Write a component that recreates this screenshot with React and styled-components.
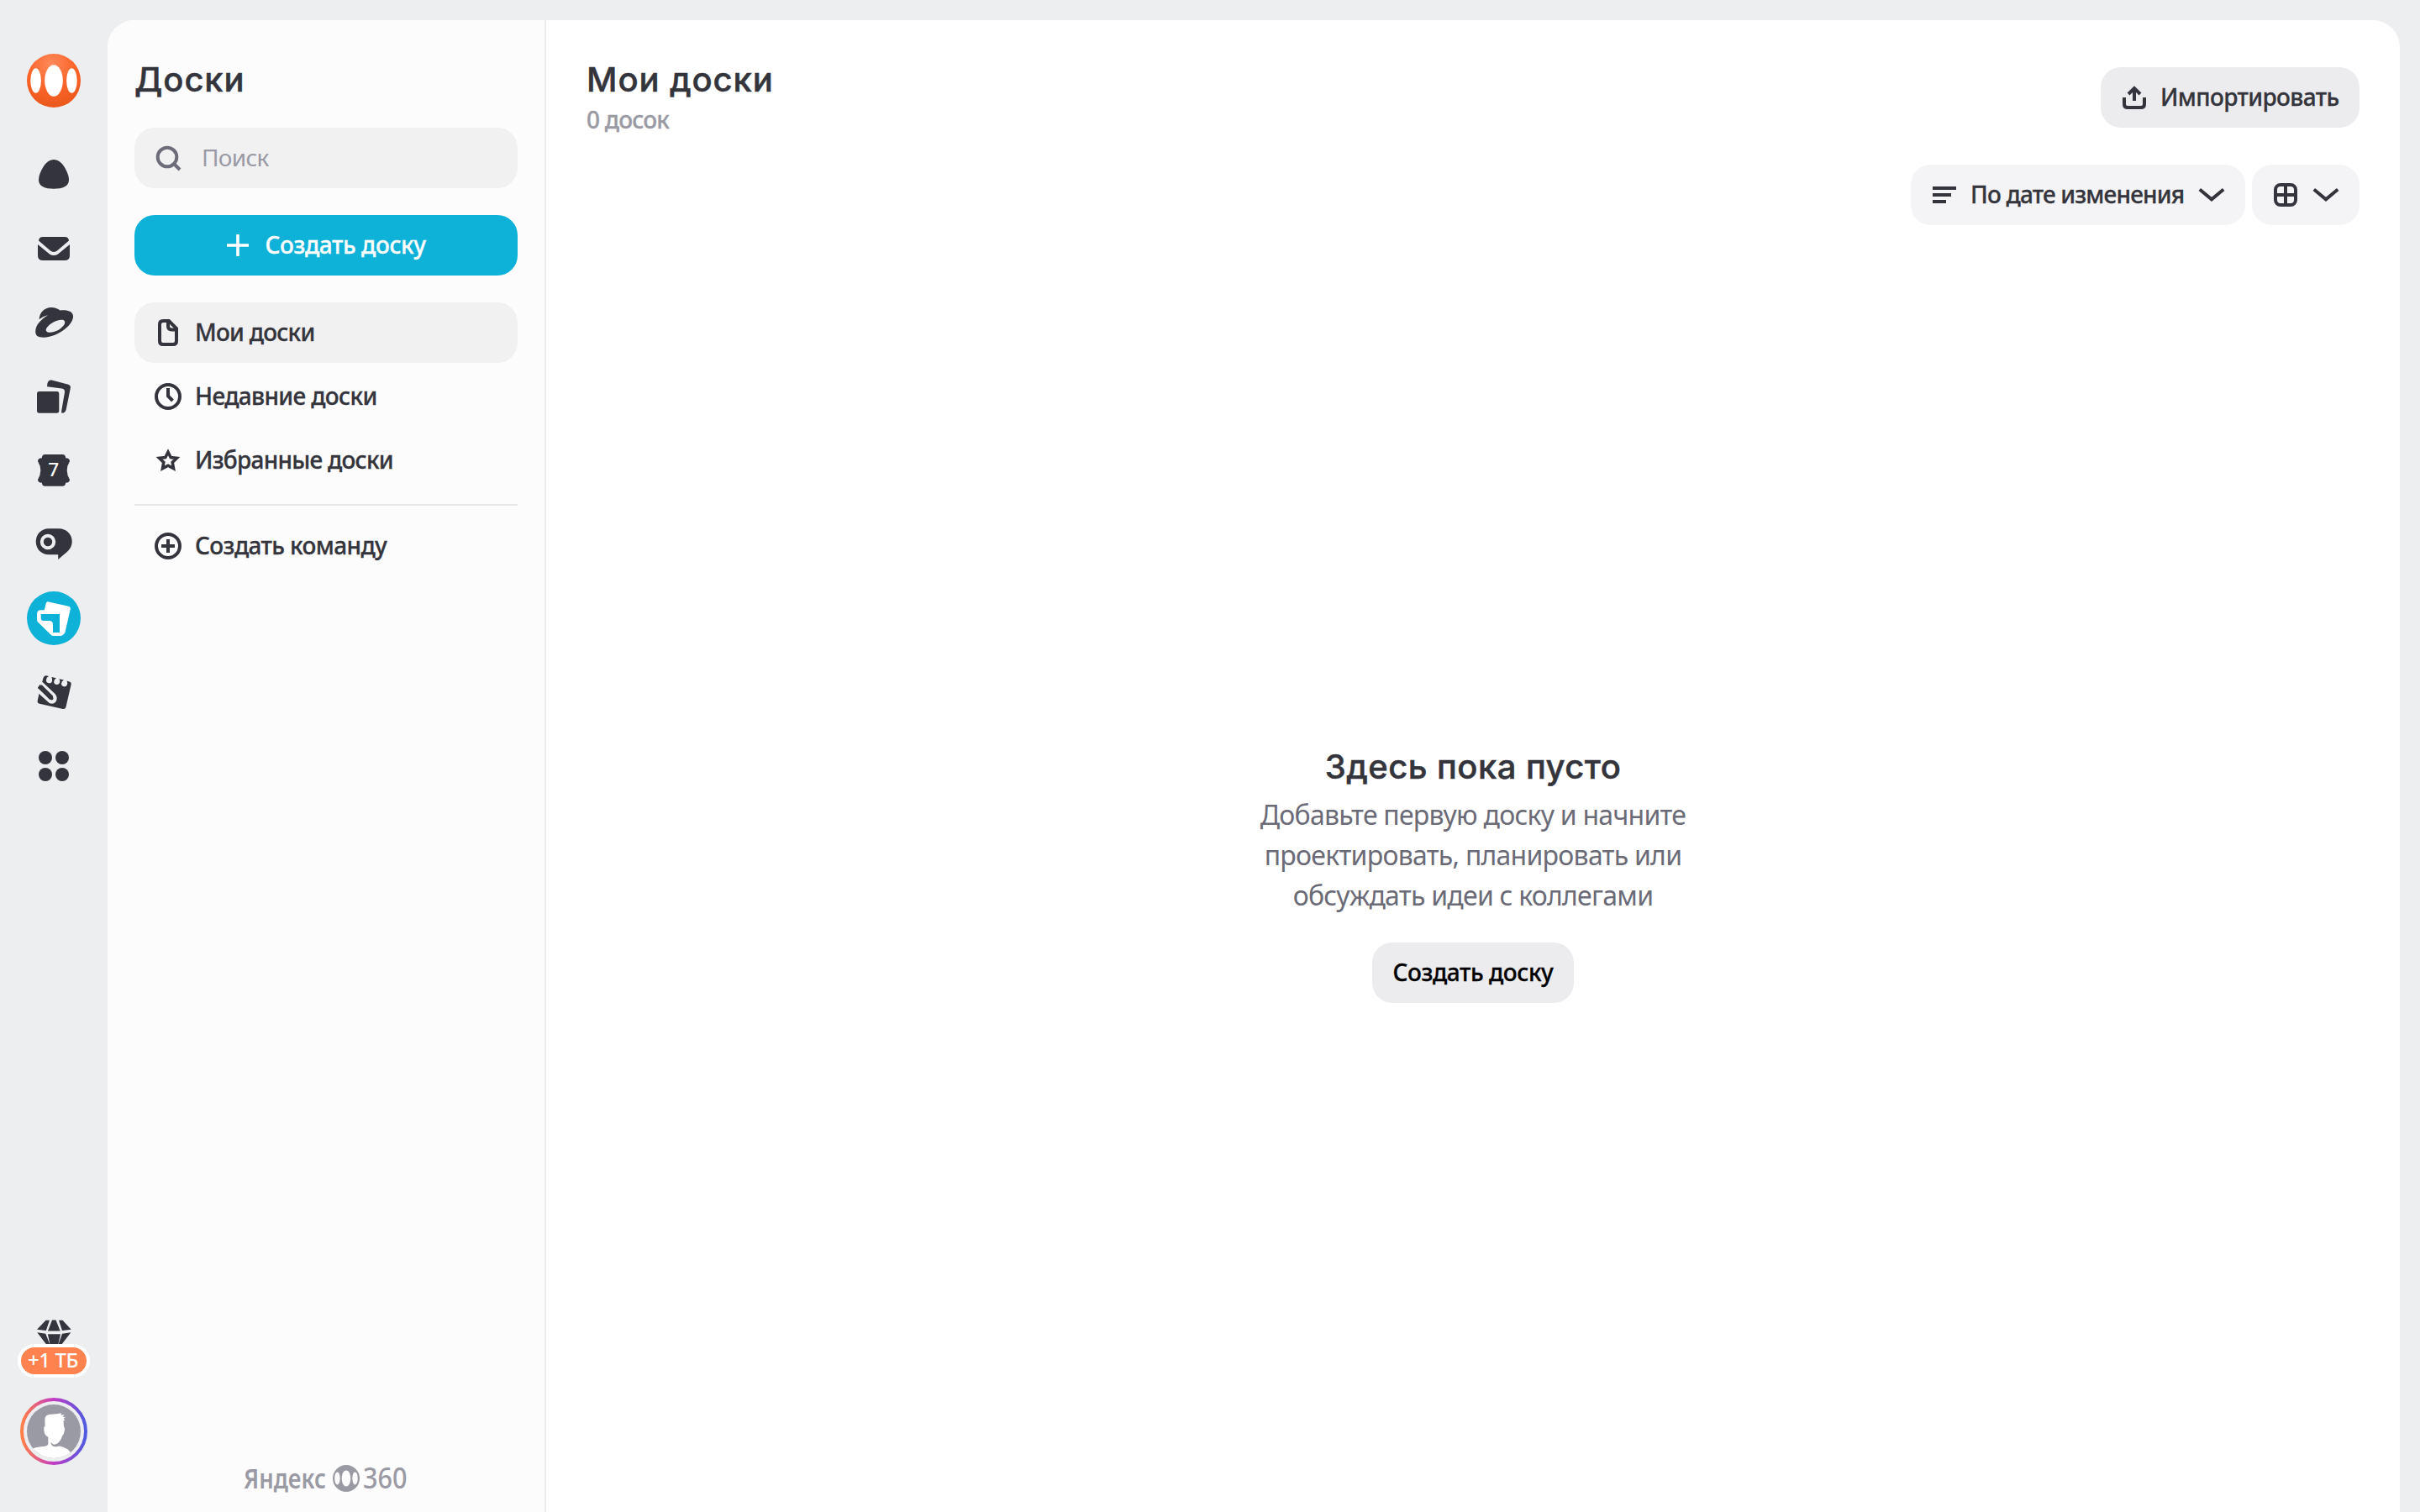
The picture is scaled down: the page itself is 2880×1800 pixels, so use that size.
import styled, { createGlobalStyle } from "styled-components";

const GlobalStyle = createGlobalStyle`
  * {
    box-sizing: border-box;
  }
  body {
    margin: 0;
    background: #edeef0;
    color: #34343c;
    font-family: "Noto Sans", "Open Sans", sans-serif;
  }
  svg {
    display: block;
    flex-shrink: 0;
  }
`;

const Page = styled.div`
  display: flex;
  width: 100%;
  height: 100vh;
  overflow: hidden;
`;

/* left rail */
const Rail = styled.nav`
  display: flex;
  flex-direction: column;
  align-items: center;
  justify-content: space-between;
  width: 128px;
  padding: 64px 0 56px;
  flex-shrink: 0;
`;
const Services = styled.div`
  display: flex;
  flex-direction: column;
  align-items: center;
  gap: 24px;
  > svg:first-child {
    margin-bottom: 24px;
  }
`;
const RailBottom = styled.div`
  display: flex;
  flex-direction: column;
  align-items: center;
`;
const Upsell = styled.div`
  height: 36px;
`;
const Badge = styled.div`
  display: flex;
  align-items: center;
  justify-content: center;
  position: relative;
  width: 86px;
  height: 40px;
  margin-bottom: 24px;
  padding: 0 2px 2px 0;
  border: 4px solid #fff;
  border-radius: 20px;
  background: #ff824f;
  color: #fff;
  font-size: 24px;
  line-height: 28px;
  font-weight: 500;
  letter-spacing: -0.4px;
  white-space: nowrap;
`;

/* boards sidebar */
const Window = styled.div`
  display: flex;
  flex: 1;
  margin: 24px 24px 0 0;
  border-radius: 32px 32px 0 0;
  background: #fff;
  overflow: hidden;
`;
const Sidebar = styled.aside`
  display: flex;
  flex-direction: column;
  width: 522px;
  padding: 46px 32px 12px;
  border-right: 2px solid #ebecee;
  background: #fcfcfc;
  flex-shrink: 0;
`;
const Title = styled.h1`
  margin: 0;
  padding-top: 1px;
  font-family: "Inter", "Noto Sans", sans-serif;
  font-size: 40px;
  line-height: 48px;
  font-weight: 500;
  -webkit-text-stroke: 0.5px currentColor;
  letter-spacing: ${({ $spacing }) => $spacing || 0}px;
  white-space: nowrap;
`;
const Search = styled.div`
  display: flex;
  align-items: center;
  gap: 24px;
  height: 72px;
  margin-top: 33px;
  padding: 0 24px;
  border-radius: 24px;
  background: #f1f1f1;
`;
const Label = styled.span`
  margin-top: -3px;
  font-size: 28px;
  line-height: 36px;
  font-weight: 500;
  -webkit-text-stroke: 0.3px currentColor;
  letter-spacing: ${({ $spacing }) => $spacing}px;
  white-space: nowrap;
`;
const Placeholder = styled(Label)`
  font-weight: 400;
  -webkit-text-stroke: 0;
  color: #9a9aa5;
`;
const CreateButton = styled.button`
  display: flex;
  align-items: center;
  justify-content: center;
  gap: 16px;
  height: 72px;
  margin-top: 32px;
  padding: 0 2px 0 0;
  border: none;
  border-radius: 24px;
  background: #0eb1d8;
  color: #fff;
  font-family: inherit;
  cursor: pointer;
`;
const Menu = styled.ul`
  display: flex;
  flex-direction: column;
  gap: 4px;
  margin: 32px 0 0;
  padding: 0;
  list-style: none;
`;
const MenuItem = styled.li`
  display: flex;
  align-items: center;
  gap: 16px;
  height: 72px;
  padding: 0 24px;
  border-radius: 24px;
  background: ${({ $active }) => ($active ? "#f1f1f1" : "transparent")};
  cursor: pointer;
`;
const Divider = styled.li`
  height: 2px;
  margin: 12px 0 8px;
  background: #e6e6e7;
`;
const SidebarFooter = styled.div`
  display: flex;
  justify-content: center;
  margin-top: auto;
`;

/* content */
const Main = styled.main`
  display: flex;
  flex-direction: column;
  flex: 1;
  padding: 46px 48px 0;
`;
const Header = styled.header`
  display: flex;
  justify-content: space-between;
  align-items: flex-start;
`;
const Count = styled.div`
  margin-top: 5px;
  font-size: 28px;
  line-height: 36px;
  font-weight: 500;
  -webkit-text-stroke: 0.3px currentColor;
  letter-spacing: -0.8px;
  color: #9a9aa5;
`;
const Toolbar = styled.div`
  display: flex;
  justify-content: flex-end;
  gap: 8px;
  margin-top: 36px;
`;
const Button = styled.button`
  display: flex;
  align-items: center;
  gap: ${({ $gap }) => $gap || 15}px;
  width: ${({ $width }) => $width}px;
  height: 72px;
  margin-top: ${({ $top }) => $top || 0}px;
  padding: 0 24px;
  border: none;
  border-radius: 24px;
  background: ${({ $light }) => ($light ? "#f4f4f6" : "#ececee")};
  color: #34343c;
  font-family: inherit;
  cursor: pointer;
  > svg:last-child {
    margin-left: auto;
  }
`;
const Empty = styled.section`
  display: flex;
  flex-direction: column;
  align-items: center;
  margin-top: 620px;
`;
const EmptyText = styled.p`
  margin: 9px 0 32px;
  font-size: 32px;
  line-height: 48px;
  letter-spacing: -0.75px;
  text-align: center;
  color: #6b6b78;
`;
const EmptyButton = styled.button`
  display: flex;
  align-items: center;
  justify-content: center;
  width: 240px;
  height: 72px;
  padding: 0;
  border: none;
  border-radius: 24px;
  background: #ececee;
  color: #000;
  font-family: inherit;
  cursor: pointer;
`;

const dark = "#34343c";

const RailIcon = ({ children }) => (
  <svg width="64" height="64" viewBox="0 0 64 64" fill={dark}>
    {children}
  </svg>
);

const LogoIcon = () => (
  <RailIcon>
    <defs>
      <radialGradient id="logo" cx="0.45" cy="0.2" r="0.8">
        <stop offset="0" stopColor="#ff8a5c" />
        <stop offset="0.55" stopColor="#fc6429" />
        <stop offset="1" stopColor="#e9581c" />
      </radialGradient>
    </defs>
    <circle cx="32" cy="32" r="32" fill="url(#logo)" />
    <g fill="#fff">
      <ellipse cx="32" cy="32" rx="10.8" ry="18.8" />
      <ellipse cx="10.6" cy="32" rx="6.3" ry="14.8" />
      <ellipse cx="53.4" cy="32" rx="6.3" ry="14.8" />
    </g>
  </RailIcon>
);

const AliceIcon = () => (
  <RailIcon>
    <path d="M32 14C26.5 14 22.8 17.6 19.6 22.5C16.6 27.2 14 33 14 38C14 46 21.5 48.7 32 48.7C42.5 48.7 50 46 50 38C50 33 47.4 27.2 44.4 22.5C41.2 17.6 37.5 14 32 14Z" />
  </RailIcon>
);

const MailIcon = () => (
  <RailIcon>
    <path d="M14 22.5C14 19.8 16 18 19 18H45C48 18 50 19.8 50 22.5L36 34.6Q34.4 36 32 36Q29.6 36 28 34.6Z" />
    <path d="M13 27L27 38.4Q29.2 40 32 40Q34.8 40 37 38.4L51 27V40Q51 46 45 46H19Q13 46 13 40Z" />
  </RailIcon>
);

const DiskIcon = () => (
  <RailIcon>
    <path
      fillRule="evenodd"
      d="M14.6 28.3C15 20 20.5 14 29 13.9C33.5 13.9 36.5 15.3 39.5 17.5C43 17 47.5 17.2 50.5 18.5C54 20 55.7 22.8 54.9 26.5C53 35 43.5 42.3 34 46.5C26 50 16.8 50.8 12.3 48C8.8 45 10 37.5 14 32.5C17 28.7 20.6 26 25 23.2C21.4 24 18 25.6 14.6 28.3ZM23 42C25 45.4 33 43.6 38.5 40.2C43.5 37 46.3 32.8 44.8 30.3C43.2 27.7 36 28.8 30.4 32.2C25 35.5 21.7 39.6 23 42Z"
    />
  </RailIcon>
);

const DocsIcon = () => (
  <RailIcon>
    <rect x="12" y="26" width="26.3" height="25.7" rx="2.6" />
    <path d="M24 20.3L24.4 16.6Q25.7 11.8 29.5 12.6L49.3 17.7Q52.6 18.7 51.8 22.3L46.7 47.5Q45.7 51.7 41.6 51.7Q40.9 51.5 41.2 49L45 27Q45.4 23.3 41.6 22.6Z" />
  </RailIcon>
);

const CalendarIcon = () => (
  <RailIcon>
    <path d="M21.5 13H42.5Q45.8 13 46.2 17.2Q51 17.3 51 21Q47.7 26.5 47.7 32Q47.7 37.5 51 43Q51 46.7 46.2 46.8Q45.8 50.8 42.5 50.8H21.5Q18.2 50.8 17.8 46.8Q13 46.7 13 43Q16.3 37.5 16.3 32Q16.3 26.5 13 21Q13 17.3 17.8 17.2Q18.2 13 21.5 13Z" />
    <text
      x="31.6"
      y="39"
      textAnchor="middle"
      fontFamily="Noto Sans"
      fontSize="22.5"
      fontWeight="500"
      fill="#fff"
    >
      7
    </text>
  </RailIcon>
);

const MessengerIcon = () => (
  <RailIcon>
    <path d="M26 13.3H38C47 13.3 53.7 20 53.7 28.5C53.7 34 51.3 37.8 47.5 41.2L37.2 50V44.3H26C17 44.3 10.7 37.3 10.7 28.8C10.7 20.3 17 13.3 26 13.3Z" />
    <circle cx="25" cy="29" r="7.2" fill="none" stroke="#edeef0" strokeWidth="4" />
  </RailIcon>
);

const BoardsIcon = () => (
  <RailIcon>
    <circle cx="32" cy="32" r="32" fill="#0eb1d8" />
    <path
      fill="#fff"
      d="M22.8 14Q23.5 11.8 26 12.4L49.5 17.8Q52.3 18.5 51.7 21.5L45.5 48.5Q45 50 43.8 51L42.3 52.3Q41.5 52.9 40.3 52.9H31.5Q29.8 52.9 28.6 51.7L13.5 37Q12 35.5 12 33.5V27Q12 22.3 16.5 22.3H20.8Z"
    />
    <path fill="#0eb1d8" d="M16.7 27H39V49H31V39.5Q31 35 26.5 35H19Q16.7 34.5 16.7 32Z" />
  </RailIcon>
);

const NotesIcon = () => (
  <RailIcon>
    <path d="M18.5 19Q19.5 12.5 22.7 12.3L26 13.1Q23.2 14.5 23 17.3A3.6 3.6 0 0 0 30.1 18.4Q30.3 16 29.4 14L35 15.2Q32.4 16.7 32.2 19.2A3.6 3.6 0 0 0 39.2 20.6Q39.7 18.3 38.6 16.2L44 17.5Q41.2 19 41 21.6A3.6 3.6 0 0 0 48 23Q48.5 20.6 47.5 18.6L50.5 19.4Q53.2 20.2 52.6 23L46.5 49.5Q45.7 52.5 42.7 51.9L15 45.7Q12.2 44.9 12.7 42.3L14.3 34.5L13 26.5Z" />
    <path
      d="M14.5 19L31.7 35.2Q34.3 38.2 33.2 41.2Q31.7 44.2 28 43.3L11.5 28.5"
      fill="none"
      stroke="#edeef0"
      strokeWidth="4.2"
    />
    <path d="M13.2 26.8L17.6 23.3L31 36.5V40.8H27Z" />
  </RailIcon>
);

const AppsIcon = () => (
  <RailIcon>
    <circle cx="22" cy="22" r="8" />
    <circle cx="42" cy="22" r="8" />
    <circle cx="22" cy="42" r="8" />
    <circle cx="42" cy="42" r="8" />
  </RailIcon>
);

const DiamondIcon = () => (
  <svg width="64" height="48" viewBox="0 0 64 48" fill={dark}>
    <path d="M22.5 7.7H27L22.8 20L12 18.7Z" />
    <path d="M30 7.5H34.5L39.7 20.5H25Z" />
    <path d="M38 7.7H42.5L52.7 18.7L42 20Z" />
    <path d="M12.3 22.3L22.3 23.8L27.5 37L23.5 37Z" />
    <path d="M25 24.3H40L36.5 40H28Z" />
    <path d="M52.3 22.3L42 23.8L37.3 37H41Z" />
  </svg>
);

const Avatar = () => (
  <svg width="80" height="80" viewBox="0 0 80 80">
    <defs>
      <linearGradient id="ring">
        <stop offset="0" stopColor="#ff8047" />
        <stop offset="0.5" stopColor="#c13bc4" />
        <stop offset="1" stopColor="#4f5be0" />
      </linearGradient>
      <clipPath id="face">
        <circle cx="40" cy="40" r="32" />
      </clipPath>
    </defs>
    <circle cx="40" cy="40" r="38" fill="none" stroke="url(#ring)" strokeWidth="4" />
    <circle cx="40" cy="40" r="32" fill="#9a9aa4" />
    <g clipPath="url(#face)">
      <path
        fill="#fff"
        d="M29.6 34L29.4 25.5Q29.5 22.5 31.5 21Q35 19.3 43 19.3L49 18.3L48.4 20.5L53 20.3L50.4 22.3L54 23.7L51.5 24.5L53.4 27L51.5 27.2L52 34.5Q53.6 36 52.7 39.5Q52 44 50.2 45.5Q48.5 51 45.5 53.5Q42 56.5 39 55.3L36.5 53Q36.5 58.5 43 58.3L47 57.6Q51 58.3 56 61Q59 63 60.5 66V76H12V61.5Q18 58.7 27 58Q33 57.5 33.3 55V46.7Q30.5 46 29.3 43Q28 39.5 28.3 35.5Q28.6 34 29.6 34Z"
      />
    </g>
  </svg>
);

const Icon = ({ color = dark, width = 4, children }) => (
  <svg width="32" height="32" viewBox="0 0 32 32" fill="none" stroke={color} strokeWidth={width}>
    {children}
  </svg>
);

const SearchIcon = () => (
  <Icon color="#6d6d79">
    <circle cx="15" cy="15" r="11.3" />
    <path d="M22.5 22.5L30 30" />
  </Icon>
);
const PlusIcon = () => (
  <Icon color="#fff" width={3.6}>
    <path d="M16 3V29M3 16H29" />
  </Icon>
);
const FileIcon = () => (
  <Icon>
    <path d="M10 2H17L26 11V26Q26 30 22 30H10Q6 30 6 26V6Q6 2 10 2Z" />
    <path d="M16 2V8Q16 12.5 20.5 12.5H26" />
  </Icon>
);
const ClockIcon = () => (
  <Icon>
    <circle cx="16" cy="16" r="14" />
    <path d="M16 6V15.5L21.5 21" />
  </Icon>
);
const StarIcon = () => (
  <Icon width={3.6}>
    <path d="M16 6.2L19.2 12.5L26.4 13.4L21.2 18.4L22.5 25.7L16 22.2L9.5 25.7L10.8 18.4L5.6 13.4L12.8 12.5Z" />
  </Icon>
);
const TeamIcon = () => (
  <Icon>
    <circle cx="16" cy="16" r="14" />
    <path d="M16 8V24M8 16H24" />
  </Icon>
);
const UploadIcon = () => (
  <Icon>
    <path d="M4 16V24Q4 28 8 28H24Q28 28 28 24V16" />
    <path d="M16 20V6M9 12L16 5L23 12" />
  </Icon>
);
const SortIcon = () => (
  <Icon>
    <path d="M2 8H30M2 16H24M2 24H18" />
  </Icon>
);
const ChevronIcon = () => (
  <Icon>
    <path d="M1.8 9.5L16 21.3L30.2 9.5" />
  </Icon>
);
const GridIcon = () => (
  <Icon>
    <rect x="4" y="4" width="24" height="24" rx="6" />
    <path d="M16 4V28M4 16H28" />
  </Icon>
);

const FooterLogo = () => (
  <svg width="200" height="56" viewBox="-2 -12 200 56" fill="#9a9aa4" fontFamily="Noto Sans" fontWeight="600">
    <text x="0" y="28" fontSize="33" textLength="98" lengthAdjust="spacingAndGlyphs">
      Яндекс
    </text>
    <path
      fillRule="evenodd"
      d="M122 0A16 16 0 1 1 122 32A16 16 0 1 1 122 0ZM122 6.6C118.8 6.6 116.8 10.8 116.8 16S118.8 25.4 122 25.4S127.2 21.2 127.2 16S125.2 6.6 122 6.6ZM111.5 8.6C109.5 8.6 108.3 12 108.3 16S109.5 23.4 111.5 23.4S114.6 20 114.6 16S113.5 8.6 111.5 8.6ZM132.5 8.6C130.5 8.6 129.4 12 129.4 16S130.5 23.4 132.5 23.4S135.7 20 135.7 16S134.5 8.6 132.5 8.6Z"
    />
    <text x="142" y="28" fontSize="33.5" fontWeight="500" textLength="52.5" lengthAdjust="spacingAndGlyphs">
      360
    </text>
  </svg>
);

const App = () => {
  return (
    <>
      <GlobalStyle />
      <Page>
        <Rail>
          <Services>
            <LogoIcon />
            <AliceIcon />
            <MailIcon />
            <DiskIcon />
            <DocsIcon />
            <CalendarIcon />
            <MessengerIcon />
            <BoardsIcon />
            <NotesIcon />
            <AppsIcon />
          </Services>
          <RailBottom>
            <Upsell>
              <DiamondIcon />
            </Upsell>
            <Badge>+1 ТБ</Badge>
            <Avatar />
          </RailBottom>
        </Rail>
        <Window>
          <Sidebar>
            <Title $spacing={0.9}>Доски</Title>
            <Search>
              <SearchIcon />
              <Placeholder $spacing={-0.7}>Поиск</Placeholder>
            </Search>
            <CreateButton>
              <PlusIcon />
              <Label $spacing={-0.4}>Создать доску</Label>
            </CreateButton>
            <Menu>
              <MenuItem $active>
                <FileIcon />
                <Label $spacing={-0.75}>Мои доски</Label>
              </MenuItem>
              <MenuItem>
                <ClockIcon />
                <Label $spacing={-0.64}>Недавние доски</Label>
              </MenuItem>
              <MenuItem>
                <StarIcon />
                <Label $spacing={-0.75}>Избранные доски</Label>
              </MenuItem>
              <Divider />
              <MenuItem>
                <TeamIcon />
                <Label $spacing={-0.6}>Создать команду</Label>
              </MenuItem>
            </Menu>
            <SidebarFooter>
              <FooterLogo />
            </SidebarFooter>
          </Sidebar>
          <Main>
            <Header>
              <div>
                <Title $spacing={0.9}>Мои доски</Title>
                <Count>0 досок</Count>
              </div>
              <Button $width={308} $top={10}>
                <UploadIcon />
                <Label $spacing={-0.63}>Импортировать</Label>
              </Button>
            </Header>
            <Toolbar>
              <Button $light $width={398}>
                <SortIcon />
                <Label $spacing={-0.82}>По дате изменения</Label>
                <ChevronIcon />
              </Button>
              <Button $light $width={128} $gap={16}>
                <GridIcon />
                <ChevronIcon />
              </Button>
            </Toolbar>
            <Empty>
              <Title as="h2" $spacing={0.45}>Здесь пока пусто</Title>
              <EmptyText>
                Добавьте первую доску и начните
                <br />
                проектировать, планировать или
                <br />
                обсуждать идеи с коллегами
              </EmptyText>
              <EmptyButton>
                <Label $spacing={-0.42}>Создать доску</Label>
              </EmptyButton>
            </Empty>
          </Main>
        </Window>
      </Page>
    </>
  );
};

export default App;
